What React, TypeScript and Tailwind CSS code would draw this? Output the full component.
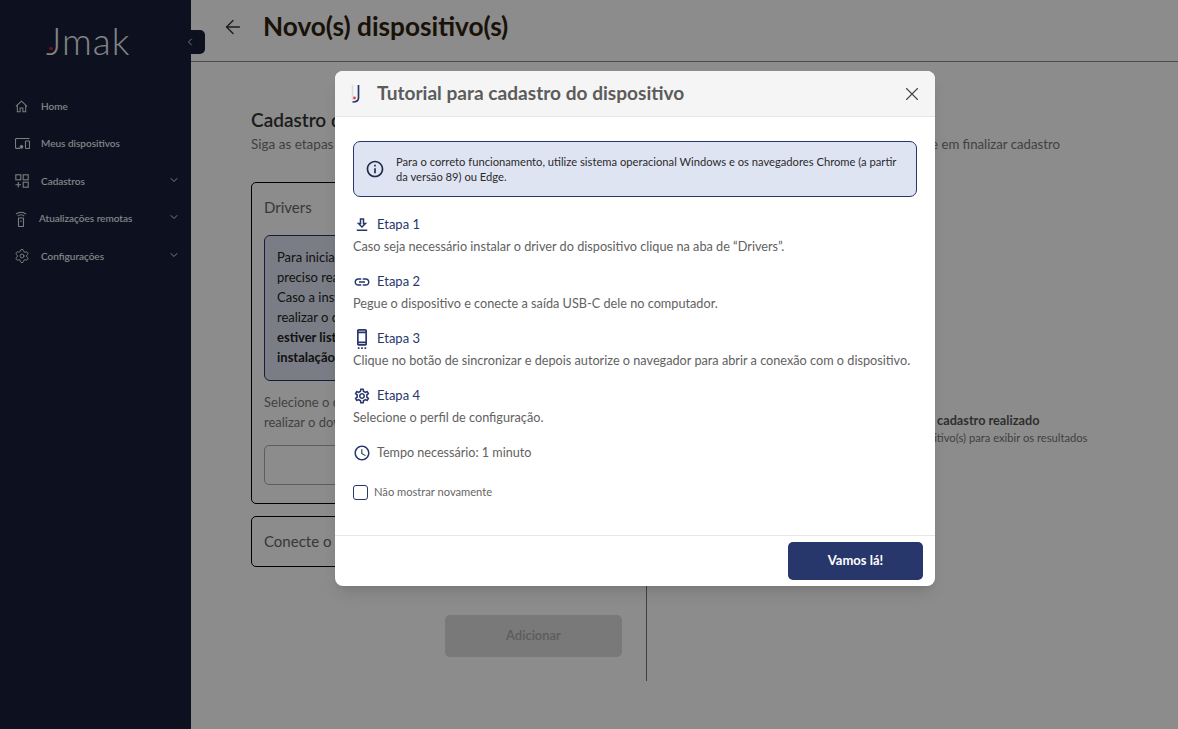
import { ArrowLeft, ChevronDown, ChevronLeft, Settings, X } from "lucide-react";
import {
  MdInfoOutline,
  MdLink,
  MdOutlineAccessTime,
  MdOutlineDownload,
  MdOutlineSettings,
  MdOutlineSettingsCell,
} from "react-icons/md";
import type { ReactNode } from "react";

function HomeIcon() {
  return (
    <svg viewBox="0 0 14 14" className="w-[13px] h-[13px]" fill="none" stroke="currentColor" strokeWidth="1.100">
      <path d="M1 6.800 7 1.300l6 5.500M2.500 5.600v7h3V8.500h3v4.100h3V5.600" />
    </svg>
  );
}

function DevicesIcon() {
  return (
    <svg viewBox="0 0 15 11" className="w-[15px] h-[11px]" fill="none" stroke="currentColor" strokeWidth="1.100">
      <path d="M5 10.400H1.500a1 1 0 0 1-1-1V1.500a1 1 0 0 1 1-1H14.500" />
      <rect x="10.500" y="3" width="4" height="7.500" rx="0.800" />
      <circle cx="6.500" cy="8.800" r="1.300" fill="currentColor" />
    </svg>
  );
}

function CadastrosIcon() {
  return (
    <svg viewBox="0 0 14 14" className="w-[14px] h-[14px]" fill="none" stroke="currentColor" strokeWidth="1.100">
      <rect x="0.800" y="0.800" width="5" height="5" />
      <rect x="8.200" y="0.800" width="5" height="5" />
      <rect x="8.200" y="8.200" width="5" height="5" />
      <path d="M3.300 8v5.500M0.500 10.700h5.500" />
    </svg>
  );
}

function RemoteIcon() {
  return (
    <svg viewBox="0 0 12 16" className="w-[12px] h-[16px]" fill="none" stroke="currentColor" strokeWidth="1.100">
      <path d="M1 3.200C3.800 0.600 8.200 0.600 11 3.200M2.800 5.200C4.600 3.600 7.400 3.600 9.200 5.200" />
      <rect x="3.500" y="7" width="5" height="8.500" rx="0.600" />
      <path d="M6 9.500v1.500" />
    </svg>
  );
}

function NavItem({ icon, label, chevron, indent }: { icon: ReactNode; label: string; chevron?: boolean; indent?: boolean }) {
  return (
    <div className="h-[37.500px] flex items-center text-[#e4e4e4]">
      <div className="w-[41px] pl-[15px] flex items-center shrink-0">{icon}</div>
      <span className={`text-[10px] font-medium text-[#f4f7fb] ${indent ? "-ml-[2px]" : ""}`}>{label}</span>
      {chevron && <ChevronDown className="ml-auto mr-[11px] -mt-[3px] w-[12px] h-[12px]" strokeWidth={2} />}
    </div>
  );
}

function Step({ icon, title, text }: { icon: ReactNode; title: string; text: string }) {
  return (
    <div className="h-[57px]">
      <div className="flex items-center h-[24px] text-[#27366b]">
        <span className="w-[24px] flex justify-start">{icon}</span>
        <span className="text-[13px]">{title}</span>
      </div>
      <p className="mt-[1px] text-[12.700px] leading-[17px] text-[#626262] whitespace-nowrap">{text}</p>
    </div>
  );
}

export default function App() {
  return (
    <div className="relative w-[1178px] h-[729px] overflow-hidden flex bg-white font-['Lato','Liberation_Sans',sans-serif]">
      {/* Sidebar */}
      <aside className="relative w-[191px] shrink-0 bg-[#18203a]">
        <div className="relative h-[87.500px] pt-[20px] pl-[46px] text-[37px] leading-[42px] font-light tracking-[1px] text-[#f0f0f0]">
          Jmak
          <span className="absolute left-[49px] top-[47px] w-[4px] h-[3px] rounded-full bg-[#d01c1c]" />
        </div>
        <nav>
          <NavItem icon={<HomeIcon />} label="Home" />
          <NavItem icon={<DevicesIcon />} label="Meus dispositivos" />
          <NavItem icon={<CadastrosIcon />} label="Cadastros" chevron />
          <NavItem icon={<RemoteIcon />} label="Atualizações remotas" chevron indent />
          <NavItem icon={<Settings className="w-[16px] h-[16px] -ml-px" strokeWidth={1.4} />} label="Configurações" chevron />
        </nav>
        <button className="absolute top-[30px] -right-[14px] w-[28px] h-[24px] rounded-[5px] bg-[#18203a] text-[#d8d8d8] flex items-center pl-[7px]">
          <ChevronLeft className="w-[12px] h-[12px]" />
        </button>
      </aside>

      {/* Page under the dialog */}
      <main className="flex-1 min-w-0">
        <header className="h-[62px] border-b border-[#8a8a8a] flex items-center pl-[31px] pb-[7px]">
          <ArrowLeft className="w-[22px] h-[22px] text-[#333]" strokeWidth={1.5} />
          <h1 className="ml-[19px] text-[26.200px] font-bold text-[#2e2210]">Novo(s) dispositivo(s)</h1>
        </header>
        <div className="pl-[60px] pt-[46px]">
          <h2 className="text-[19px] leading-[24px] font-semibold text-[#333]">Cadastro de dispositivo</h2>
          <p className="mt-[2px] w-[809px] flex justify-between text-[13.500px] leading-[20px] text-[#777] whitespace-nowrap">
            <span>Siga as etapas abaixo para adicionar</span>
            <span className="text-[13.200px]">clique em finalizar cadastro</span>
          </p>
          <div className="mt-[28px] flex">
            <div className="w-[371px]">
              <div className="h-[322px] rounded-[5px] border border-black px-[12px] pt-[13px]">
                <h3 className="text-[15px] leading-[22px] text-[#666]">Drivers</h3>
                <div className="mt-[17px] h-[146px] rounded-[6px] border border-[#27366b] bg-[#dfe4f3] px-[12px] py-[11px] text-[13px] leading-[20px] text-[#222]">
                  Para iniciar o cadastro é
                  <br />
                  preciso realizar o driver.
                  <br />
                  Caso a instalação falhe,
                  <br />
                  realizar o download.
                  <br />
                  <b>estiver listado</b>
                  <br />
                  <b>instalação</b>
                </div>
                <p className="mt-[11px] text-[13px] leading-[20px] text-[#777]">
                  Selecione o driver e clique para
                  <br />
                  realizar o download
                </p>
                <div className="mt-[13px] h-[40px] rounded-[5px] border border-[#aaa]" />
              </div>
              <div className="mt-[12px] h-[51px] rounded-[5px] border border-black px-[12px] flex items-center text-[15px] text-[#666]">Conecte o dispositivo</div>
              <div className="mt-[48px] flex justify-end">
                <button className="w-[177px] h-[42px] rounded-[5px] bg-[#dcdcdc] text-[13px] font-semibold text-[#a8a8a8]">Adicionar</button>
              </div>
            </div>
            <div className="ml-[24px] h-[499px] border-l border-[#777]" />
            <div className="flex-1 pt-[229px] pl-[100px] text-center">
              <p className="text-[12.700px] leading-[18px] font-bold text-[#555] whitespace-nowrap">Nenhum cadastro realizado</p>
              <p className="text-[11.200px] leading-[18px] text-[#777] whitespace-nowrap">Adicione o(s) dispositivo(s) para exibir os resultados</p>
            </div>
          </div>
        </div>
      </main>

      {/* Overlay and dialog */}
      <div className="absolute inset-0 bg-black/45 pt-[71px] pl-[335px]">
        <div className="w-[600px] h-[515px] rounded-[8px] bg-white overflow-hidden flex flex-col shadow-lg">
          <div className="h-[46px] shrink-0 bg-[#f5f5f5] border-b border-[#e6e6e6] flex items-center pl-[15px] pr-[12px]">
            <svg viewBox="0 0 12 20" className="w-[12px] h-[20px]" fill="none">
              <path d="M2.500 1v15" stroke="#d9dcea" strokeWidth="1.500" />
              <path d="M8.500 1v13c0 3-2 4-6 4" stroke="#27366b" strokeWidth="1.700" />
              <circle cx="4.500" cy="14" r="1.400" fill="#e2443f" />
            </svg>
            <h2 className="ml-[15px] text-[19.100px] font-bold text-[#5c5c5c]">Tutorial para cadastro do dispositivo</h2>
            <X className="ml-auto w-[22px] h-[22px] text-[#444]" strokeWidth={1.2} />
          </div>
          <div className="flex-1 px-[18px] pt-[24px]">
            <div className="h-[56px] rounded-[7px] border border-[#27366b] bg-[#dfe4f3] flex items-center pl-[11px]">
              <MdInfoOutline className="w-[20px] h-[20px] text-[#1f2a4d] shrink-0" />
              <p className="ml-[11px] text-[11.200px] leading-[15px] text-[#2b2b2b]">
                Para o correto funcionamento, utilize sistema operacional Windows e os navegadores Chrome (a partir
                <br />
                da versão 89) ou Edge.
              </p>
            </div>
            <div className="mt-[16px]">
              <Step icon={<MdOutlineDownload className="w-[18px] h-[18px]" />} title="Etapa 1" text="Caso seja necessário instalar o driver do dispositivo clique na aba de “Drivers”." />
              <Step icon={<MdLink className="w-[18px] h-[18px]" />} title="Etapa 2" text="Pegue o dispositivo e conecte a saída USB-C dele no computador." />
              <Step icon={<MdOutlineSettingsCell className="w-[20px] h-[20px] -ml-px" />} title="Etapa 3" text="Clique no botão de sincronizar e depois autorize o navegador para abrir a conexão com o dispositivo." />
              <Step icon={<MdOutlineSettings className="w-[18px] h-[18px]" />} title="Etapa 4" text="Selecione o perfil de configuração." />
            </div>
            <div className="flex items-center h-[24px] text-[#626262]">
              <MdOutlineAccessTime className="w-[18px] h-[18px] text-[#27366b] mr-[6px]" />
              <span className="text-[12.600px]">Tempo necessário: 1 minuto</span>
            </div>
            <label className="mt-[19px] flex items-center">
              <span className="w-[15px] h-[15px] rounded-[3px] border border-[#27366b]" />
              <span className="ml-[6px] text-[11.150px] text-[#666]">Não mostrar novamente</span>
            </label>
          </div>
          <div className="h-[51px] shrink-0 border-t border-[#e6e6e6] flex justify-end pt-[6px] pr-[12px]">
            <button className="w-[135px] h-[38px] rounded-[5px] bg-[#27366b] text-[13px] font-bold text-white">Vamos lá!</button>
          </div>
        </div>
      </div>
    </div>
  );
}
